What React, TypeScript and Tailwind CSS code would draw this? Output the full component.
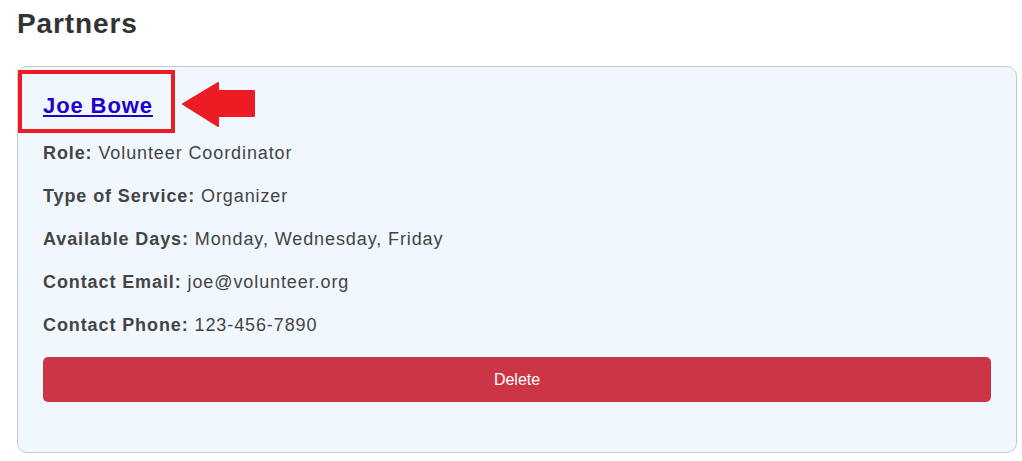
import React from "react";

const rows: [string, string][] = [
  ["Role:", "Volunteer Coordinator"],
  ["Type of Service:", "Organizer"],
  ["Available Days:", "Monday, Wednesday, Friday"],
  ["Contact Email:", "joe@volunteer.org"],
  ["Contact Phone:", "123-456-7890"],
];

export default function App() {
  return (
    <div
      className="bg-white w-[1022px] h-[461px] overflow-hidden pl-[17px] pr-[5px] text-[#333]"
      style={{ fontFamily: '"Liberation Sans", Arial, sans-serif' }}
    >
      <h2 className="text-[28px] font-bold leading-[32px] pt-[8px] tracking-[0.9px] text-[#333]">Partners</h2>
      <div className="mt-[26px] relative border border-[#c8c8c8] rounded-[10px] bg-[#f0f7ff] pt-[26px] px-[25px] pb-[50px]">
        <a href="#" className="block text-[22px] leading-[26px] font-bold underline tracking-[0.9px] text-[#2200cc] w-max">
          Joe Bowe
        </a>
        <div className="absolute left-0 top-[3px] w-[157px] h-[63px] border-[4px] border-[#ed1c24]" />
        <svg className="absolute left-[164px] top-[15px]" width="74" height="46" viewBox="0 0 74 46">
          <polygon points="1,22 36,1 36,9 72,9 72,34 36,34 36,44" fill="#ed1c24" strokeLinejoin="round" stroke="#ed1c24" strokeWidth="2" />
        </svg>
        <div className="mt-[24px] flex flex-col gap-[22px] text-[18px] leading-[21px] tracking-[0.9px] text-[#444]">
          {rows.map(([k, v]) => (
            <p key={k}>
              <span className="font-bold">{k}</span> {v}
            </p>
          ))}
        </div>
        <button className="mt-[21px] w-full h-[45px] rounded-[5px] bg-[#cc3545] text-white text-[16px]">
          Delete
        </button>
      </div>
    </div>
  );
}
